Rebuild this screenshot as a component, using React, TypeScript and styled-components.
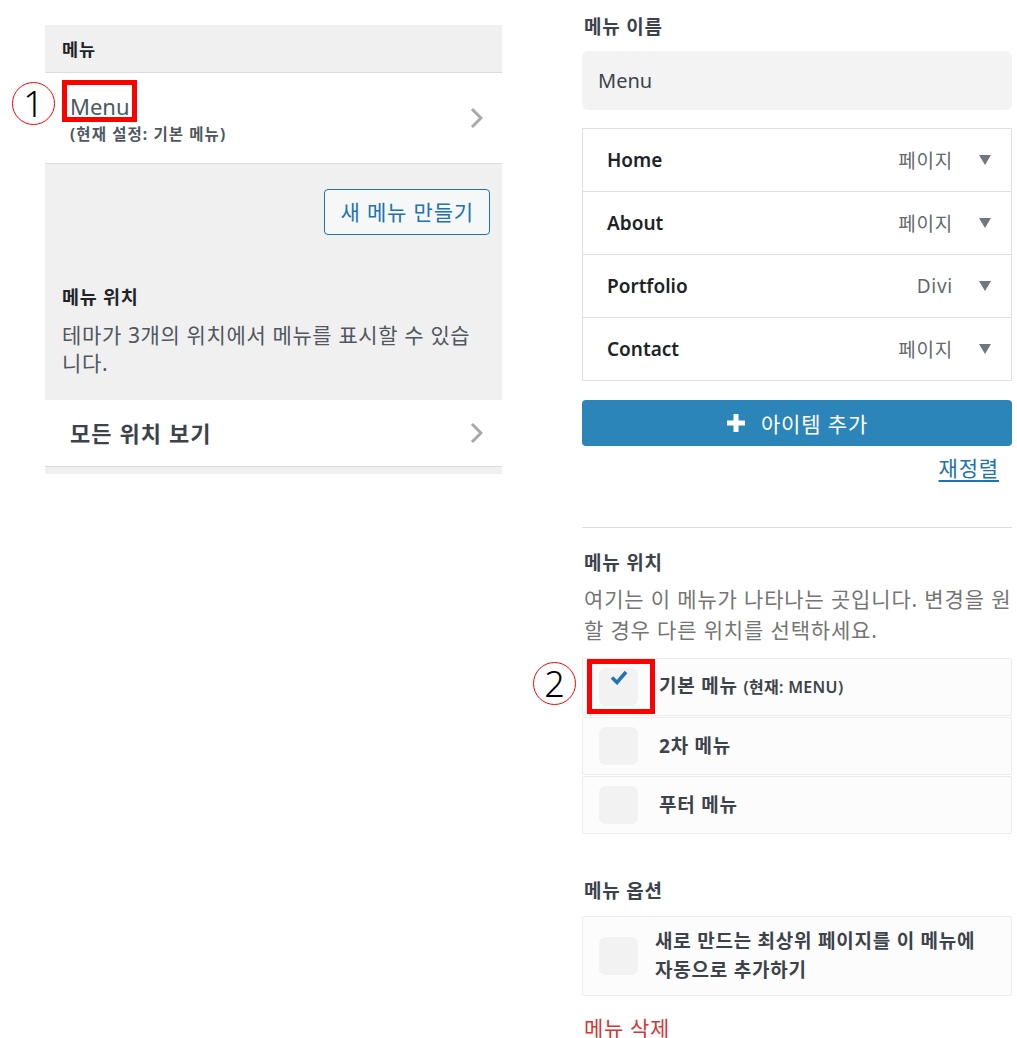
import * as React from "react";
import styled, { createGlobalStyle } from "styled-components";

const GlobalStyle = createGlobalStyle`
  html, body {
    margin: 0;
    padding: 0;
    background: #ffffff;
  }
  body {
    font-family: "Noto Sans", "Noto Sans CJK KR", sans-serif;
    color: #3c434a;
  }
  * {
    box-sizing: border-box;
  }
`;

const Page = styled.div`
  display: flex;
  align-items: flex-start;
  gap: 80px;
  padding-left: 45px;
  width: 1017px;
`;

/* ---------- left panel ---------- */

const LeftPanel = styled.div`
  width: 457px;
  margin-top: 25px;
  background: #f0f0f1;
`;

const PanelHeader = styled.div`
  height: 48px;
  display: flex;
  align-items: center;
  padding-left: 17px;
  font-size: 17.5px;
  letter-spacing: 0.05em;
  font-weight: 700;
  color: #1d2327;
  border-bottom: 1px solid #dcdcde;
`;

const NavRow = styled.div<{ $height: number }>`
  position: relative;
  height: ${({ $height }) => $height}px;
  display: flex;
  align-items: center;
  justify-content: space-between;
  padding: 0 19px 0 25px;
  background: #ffffff;
  border-bottom: 1px solid #dcdcde;
`;

const NavText = styled.div`
  display: flex;
  flex-direction: column;
`;

const NavTitle = styled.div`
  font-size: 22px;
  line-height: 26px;
  color: #50575e;
`;

const NavSub = styled.div`
  margin-top: 6px;
  font-size: 15.5px;
  letter-spacing: 0.07em;
  line-height: 18px;
  font-weight: 700;
  color: #50575e;
`;

const NavLabel = styled.div`
  font-size: 22px;
  letter-spacing: 0.05em;
  line-height: 28px;
  font-weight: 700;
  color: #3c434a;
`;

const GrayBody = styled.div`
  padding: 25px 25px 23px 17px;
  display: flex;
  flex-direction: column;
`;

const OutlineButton = styled.button`
  align-self: flex-end;
  margin-right: -13px;
  height: 46px;
  padding: 0 15px;
  border: 1px solid #2271b1;
  border-radius: 4px;
  background: #f6f7f7;
  color: #2271b1;
  font-family: inherit;
  font-size: 21px;
  letter-spacing: 0.04em;
  line-height: 24px;
  cursor: pointer;
`;

const SideHeading = styled.div`
  margin-top: 50px;
  font-size: 18.5px;
  letter-spacing: 0.04em;
  line-height: 24px;
  font-weight: 700;
  color: #1d2327;
`;

const SideText = styled.p`
  margin: 12px 0 0;
  font-size: 21px;
  letter-spacing: 0.03em;
  line-height: 28px;
  color: #50575e;
`;

const PanelFoot = styled.div`
  height: 7px;
  background: #f0f0f1;
`;

/* ---------- annotations ---------- */

const Marker = styled.div<{ $left: number; $top: number; $w: number; $h: number }>`
  position: absolute;
  left: ${({ $left }) => $left}px;
  top: ${({ $top }) => $top}px;
  width: ${({ $w }) => $w}px;
  height: ${({ $h }) => $h}px;
  border: 5px solid #ff0000;
  pointer-events: none;
`;

const Badge = styled.div<{ $left: number; $top: number }>`
  position: absolute;
  left: ${({ $left }) => $left}px;
  top: ${({ $top }) => $top}px;
  width: 43px;
  height: 43px;
  border: 1.5px solid #ff0000;
  border-radius: 50%;
  background: #ffffff;
  display: flex;
  align-items: center;
  justify-content: center;
  font-family: "Noto Sans", sans-serif;
  font-weight: 300;
  font-size: 36px;
  line-height: 1;
  color: #000000;
`;

/* ---------- right panel ---------- */

const RightPanel = styled.div`
  width: 430px;
  padding-top: 15px;
  display: flex;
  flex-direction: column;
`;

const FieldLabel = styled.div<{ $gap?: number }>`
  margin-top: ${({ $gap }) => $gap ?? 0}px;
  font-size: 19px;
  letter-spacing: 0.04em;
  line-height: 24px;
  font-weight: 700;
  color: #3c434a;
  padding-left: 2px;
`;

const NameInput = styled.div`
  margin-top: 12px;
  height: 59px;
  border-radius: 6px;
  background: #f3f3f3;
  display: flex;
  align-items: center;
  padding-left: 16px;
  font-size: 20px;
  color: #3c434a;
`;

const ItemList = styled.div`
  margin-top: 18px;
  border: 1px solid #e0e0e0;
`;

const ItemRow = styled.div`
  height: 63px;
  display: flex;
  align-items: center;
  padding: 0 20px 0 24px;
  border-bottom: 1px solid #e0e0e0;
  &:last-child {
    height: 62px;
    border-bottom: none;
  }
`;

const ItemName = styled.div`
  flex: 1;
  font-size: 19px;
  font-weight: 600;
  color: #1d2327;
`;

const ItemType = styled.div`
  font-size: 19px;
  letter-spacing: 0.04em;
  color: #646970;
  margin-right: 26px;
`;

const AddButton = styled.button`
  margin-top: 19px;
  height: 46px;
  border: none;
  border-radius: 4px;
  background: #2c85b9;
  color: #ffffff;
  display: flex;
  align-items: center;
  justify-content: center;
  gap: 15px;
  font-family: inherit;
  font-size: 21px;
  letter-spacing: 0.04em;
  cursor: pointer;
`;

const TextLink = styled.a`
  align-self: flex-end;
  margin: 9px 13px 0 0;
  font-size: 21px;
  letter-spacing: 0.04em;
  line-height: 26px;
  color: #2271b1;
  text-decoration: underline;
  text-underline-offset: 4px;
`;

const Divider = styled.hr`
  margin: 46px 0 0;
  border: none;
  border-top: 1px solid #dcdcde;
`;

const HelpText = styled.p`
  margin: 9px 0 0;
  padding-left: 2px;
  font-size: 21px;
  letter-spacing: 0.04em;
  line-height: 31px;
  color: #757575;
`;

const CheckList = styled.div<{ $gap?: number }>`
  margin-top: ${({ $gap }) => $gap ?? 12}px;
  display: flex;
  flex-direction: column;
`;

const CheckRow = styled.label<{ $height?: number; $gap?: number }>`
  position: relative;
  min-height: ${({ $height }) => $height ?? 58}px;
  display: flex;
  align-items: center;
  gap: ${({ $gap }) => $gap ?? 21}px;
  padding: 0 16px;
  background: #fcfcfc;
  border: 1px solid #ececec;
  border-radius: 2px;
  & + & {
    margin-top: 1px;
  }
`;

const CheckBox = styled.span`
  flex: none;
  width: 39px;
  height: 38px;
  border-radius: 7px;
  background: #f2f2f2;
  display: flex;
  justify-content: center;
  padding-top: 2px;
`;

const CheckText = styled.span`
  font-size: 19px;
  letter-spacing: 0.04em;
  line-height: 29px;
  font-weight: 700;
  color: #3c434a;
  word-break: keep-all;
`;

const CheckNote = styled.span`
  font-size: 16px;
  letter-spacing: 0.02em;
  font-weight: 600;
`;

const DangerLink = styled.a`
  margin-top: 18px;
  padding-left: 2px;
  font-size: 21px;
  letter-spacing: 0.03em;
  line-height: 28px;
  color: #d63638;
  text-decoration: none;
`;

/* ---------- icons ---------- */

const Chevron = () => (
  <svg width="13" height="22" viewBox="0 0 13 22">
    <polyline points="2,2 11,11 2,20" fill="none" stroke="#a7aaad" strokeWidth="3" />
  </svg>
);

const Caret = () => (
  <svg width="12" height="10" viewBox="0 0 12 10">
    <polygon points="0,0 12,0 6,10" fill="#72777c" />
  </svg>
);

const Plus = () => (
  <svg width="20" height="20" viewBox="0 0 20 20">
    <path d="M10 1v18M1 10h18" stroke="#ffffff" strokeWidth="5" />
  </svg>
);

const Tick = () => (
  <svg width="18" height="15" viewBox="0 0 18 15">
    <path d="M2 7.5l5 5L16 2" fill="none" stroke="#2271b1" strokeWidth="3.5" strokeLinejoin="miter" />
  </svg>
);

const items = [
  { name: "Home", type: "페이지" },
  { name: "About", type: "페이지" },
  { name: "Portfolio", type: "Divi" },
  { name: "Contact", type: "페이지" },
];

const locations = [
  { label: "기본 메뉴", note: "(현재: MENU)", checked: true },
  { label: "2차 메뉴", checked: false },
  { label: "푸터 메뉴", checked: false },
];

export default function App() {
  return (
    <>
      <GlobalStyle />
      <Page>
        <LeftPanel>
          <PanelHeader>메뉴</PanelHeader>
          <NavRow $height={91}>
            <Badge $left={-33} $top={9}>1</Badge>
            <Marker $left={17} $top={7} $w={75} $h={42} />
            <NavText>
              <NavTitle>Menu</NavTitle>
              <NavSub>(현재 설정: 기본 메뉴)</NavSub>
            </NavText>
            <Chevron />
          </NavRow>
          <GrayBody>
            <OutlineButton>새 메뉴 만들기</OutlineButton>
            <SideHeading>메뉴 위치</SideHeading>
            <SideText>테마가 3개의 위치에서 메뉴를 표시할 수 있습니다.</SideText>
          </GrayBody>
          <NavRow $height={67}>
            <NavLabel>모든 위치 보기</NavLabel>
            <Chevron />
          </NavRow>
          <PanelFoot />
        </LeftPanel>

        <RightPanel>
          <FieldLabel>메뉴 이름</FieldLabel>
          <NameInput>Menu</NameInput>
          <ItemList>
            {items.map((it) => (
              <ItemRow key={it.name}>
                <ItemName>{it.name}</ItemName>
                <ItemType>{it.type}</ItemType>
                <Caret />
              </ItemRow>
            ))}
          </ItemList>
          <AddButton>
            <Plus />
            아이템 추가
          </AddButton>
          <TextLink href="#">재정렬</TextLink>
          <Divider />
          <FieldLabel $gap={23}>메뉴 위치</FieldLabel>
          <HelpText>여기는 이 메뉴가 나타나는 곳입니다. 변경을 원할 경우 다른 위치를 선택하세요.</HelpText>
          <CheckList>
            {locations.map((loc, i) => (
              <CheckRow key={loc.label}>
                {i === 0 && (
                  <>
                    <Badge $left={-50} $top={3}>2</Badge>
                    <Marker $left={4} $top={0} $w={68} $h={55} />
                  </>
                )}
                <CheckBox>{loc.checked && <Tick />}</CheckBox>
                <CheckText>
                  {loc.label} {loc.note && <CheckNote>{loc.note}</CheckNote>}
                </CheckText>
              </CheckRow>
            ))}
          </CheckList>
          <FieldLabel $gap={45}>메뉴 옵션</FieldLabel>
          <CheckList $gap={13}>
            <CheckRow $height={80} $gap={17}>
              <CheckBox />
              <CheckText>새로 만드는 최상위 페이지를 이 메뉴에 자동으로 추가하기</CheckText>
            </CheckRow>
          </CheckList>
          <DangerLink href="#">메뉴 삭제</DangerLink>
        </RightPanel>
      </Page>
    </>
  );
}
